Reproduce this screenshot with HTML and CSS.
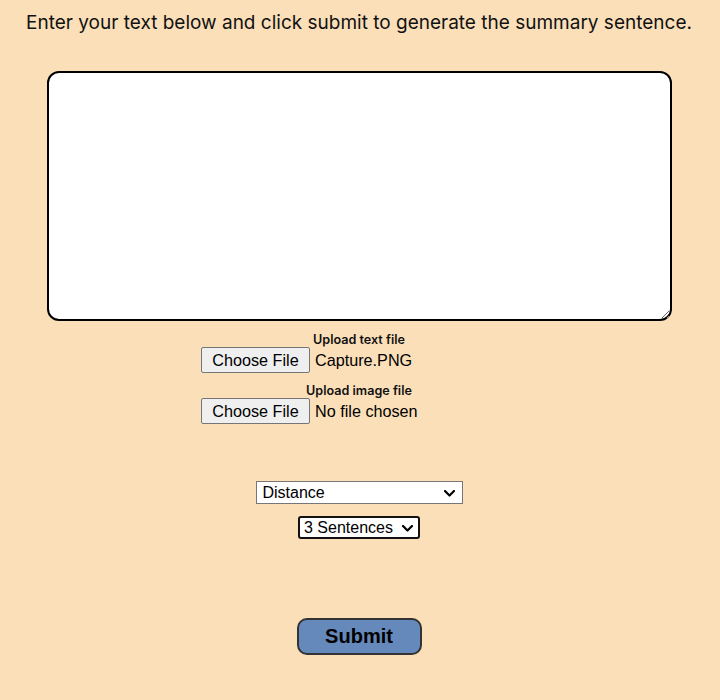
FILE: index.html
```html
<!DOCTYPE html>
<html>
<head>
<meta charset="utf-8">
<link rel="stylesheet" href="styles.css">
</head>
<body>
<main class="page">
  <h1 class="title">Enter your text below and click submit to generate the summary sentence.</h1>
  <textarea class="input-text"></textarea>
  <div class="upload">
    <label class="upload-label">Upload text file</label>
    <div class="file-field">
      <span class="file-btn">Choose File</span>
      <span class="file-name">Capture.PNG</span>
    </div>
  </div>
  <div class="upload">
    <label class="upload-label">Upload image file</label>
    <div class="file-field">
      <span class="file-btn">Choose File</span>
      <span class="file-name">No file chosen</span>
    </div>
  </div>
  <span class="select-wrap method-wrap">
    <select class="method">
      <option>Distance</option>
    </select>
    <svg class="chev" width="11" height="7" viewBox="0 0 11 7"><path d="M1 1 L5.5 5.5 L10 1" fill="none" stroke="#000" stroke-width="2.2" stroke-linecap="round" stroke-linejoin="round"/></svg>
  </span>
  <span class="select-wrap count-wrap">
    <select class="count">
      <option>3 Sentences</option>
    </select>
    <svg class="chev" width="11" height="7" viewBox="0 0 11 7"><path d="M1 1 L5.5 5.5 L10 1" fill="none" stroke="#000" stroke-width="2.2" stroke-linecap="round" stroke-linejoin="round"/></svg>
  </span>
  <button class="submit">Submit</button>
</main>
</body>
</html>
```
FILE: styles.css
```css
html, body {
  margin: 0;
  padding: 0;
  background: #fbdfb9;
}
.page {
  width: 718px;
  display: flex;
  flex-direction: column;
  align-items: center;
  font-family: "Liberation Sans", Arial, sans-serif;
  color: #000;
}
.title {
  margin: 12px 0 0;
  font-family: Inter, "Noto Sans", sans-serif;
  font-size: 19px;
  line-height: 22px;
  font-weight: 400;
  color: #111;
}
.input-text {
  box-sizing: border-box;
  margin-top: 37px;
  width: 625px;
  height: 250px;
  border: 2px solid #000;
  border-radius: 12px;
  background: #fff;
  resize: both;
}
.upload {
  display: flex;
  flex-direction: column;
  align-items: center;
  margin-top: 12px;
}
.upload + .upload {
  margin-top: 11px;
}
.upload-label {
  font-family: Inter, "Noto Sans", sans-serif;
  font-size: 12.6px;
  line-height: 14px;
  font-weight: 600;
  color: #111;
}
.file-field {
  width: 316px;
  display: flex;
  align-items: center;
  font-size: 16.2px;
  line-height: 18px;
}
.file-btn {
  box-sizing: border-box;
  height: 26px;
  width: 109px;
  display: flex;
  align-items: center;
  justify-content: center;
  background: #efefef;
  border: 1px solid #767676;
  border-radius: 2px;
  font-size: 16.2px;
  color: #000;
  padding-bottom: 1px;
}
.file-name {
  margin-left: 5px;
  padding-bottom: 1px;
}
.select-wrap {
  position: relative;
  display: flex;
}
.method-wrap {
  margin-top: 57px;
}
.count-wrap {
  margin-top: 12px;
}
.chev {
  position: absolute;
  right: 8px;
  top: 9px;
  pointer-events: none;
}
.count-wrap .chev {
  right: 7px;
}
.method, .count {
  -webkit-appearance: none;
  appearance: none;
  box-sizing: border-box;
  height: 23px;
  font-family: "Liberation Sans", Arial, sans-serif;
  font-size: 16px;
  background: #fff;
  color: #000;
  margin: 0;
}
.method {
  width: 207px;
  border: 1px solid #767676;
  border-radius: 0;
  padding: 0 0 0 6px;
}
.count {
  width: 122px;
  border: 2px solid #111;
  border-radius: 3px;
  padding: 0 0 0 4px;
}
.submit {
  box-sizing: border-box;
  margin-top: 79px;
  width: 125px;
  height: 37px;
  background: #6689bc;
  border: 2px solid #333;
  border-radius: 10px;
  font-family: "Liberation Sans", Arial, sans-serif;
  font-size: 20px;
  font-weight: 700;
  color: #000;
}
```
